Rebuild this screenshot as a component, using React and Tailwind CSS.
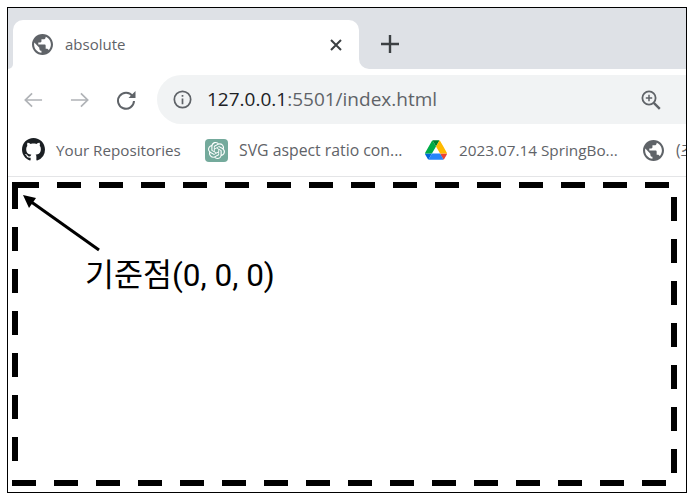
// App.jsx
import React from 'react';
import { SiOpenai } from 'react-icons/si';

const UI_FONT = 'font-["Open_Sans","Noto_Sans_CJK_KR",sans-serif]';

const GLOBE =
  'M12 2C6.48 2 2 6.48 2 12s4.48 10 10 10 10-4.48 10-10S17.52 2 12 2zm-1 17.93c-3.95-.49-7-3.85-7-7.93 0-.62.08-1.21.21-1.79L9 15v1c0 1.1.9 2 2 2v1.93zm6.9-2.54c-.26-.81-1-1.39-1.9-1.39h-1v-3c0-.55-.45-1-1-1H8v-2h2c.55 0 1-.45 1-1V7h2c1.1 0 2-.9 2-2v-.41c2.93 1.19 5 4.06 5 7.41 0 2.08-.8 3.97-2.1 5.39z';

const Globe = ({ className }) => (
  <svg viewBox="2 2 20 20" className={className} fill="#5f6368">
    <path d={GLOBE} />
  </svg>
);

const GithubMark = () => (
  <svg viewBox="0 0 16 16" className="w-[23px] h-[23px] shrink-0" fill="#1b1f23">
    <path d="M8 0C3.58 0 0 3.58 0 8c0 3.54 2.29 6.53 5.47 7.59.4.07.55-.17.55-.38 0-.19-.01-.82-.01-1.49-2.01.37-2.53-.49-2.69-.94-.09-.23-.48-.94-.82-1.13-.28-.15-.68-.52-.01-.53.63-.01 1.08.58 1.23.82.72 1.21 1.87.87 2.33.66.07-.52.28-.87.51-1.07-1.78-.2-3.64-.89-3.64-3.95 0-.87.31-1.59.82-2.15-.08-.2-.36-1.02.08-2.12 0 0 .67-.21 2.2.82.64-.18 1.32-.27 2-.27.68 0 1.36.09 2 .27 1.53-1.04 2.2-.82 2.2-.82.44 1.1.16 1.92.08 2.12.51.56.82 1.27.82 2.15 0 3.07-1.87 3.75-3.65 3.95.29.25.54.73.54 1.48 0 1.07-.01 1.93-.01 2.2 0 .21.15.46.55.38A8.013 8.013 0 0016 8c0-4.42-3.58-8-8-8z" />
  </svg>
);

const DriveLogo = () => (
  <svg viewBox="0 0 87.3 78" className="w-[22px] h-[20px] shrink-0">
    <path d="m6.6 66.85 3.85 6.65c.8 1.4 1.95 2.5 3.3 3.3l13.75-23.8h-27.5c0 1.55.4 3.1 1.2 4.5z" fill="#0066da" />
    <path d="m43.65 25-13.75-23.8c-1.35.8-2.5 1.9-3.3 3.3l-25.4 44a9.06 9.06 0 0 0 -1.2 4.5h27.5z" fill="#00ac47" />
    <path d="m73.55 76.8c1.35-.8 2.5-1.9 3.3-3.3l1.6-2.75 7.65-13.25c.8-1.4 1.2-2.95 1.2-4.5h-27.502l5.852 11.5z" fill="#ea4335" />
    <path d="m43.65 25 13.75-23.8c-1.35-.8-2.9-1.2-4.5-1.2h-18.5c-1.6 0-3.15.45-4.5 1.2z" fill="#00832d" />
    <path d="m59.8 53h-32.3l-13.75 23.8c1.35.8 2.9 1.2 4.5 1.2h50.8c1.6 0 3.15-.45 4.5-1.2z" fill="#2684fc" />
    <path d="m73.4 26.5-12.7-22c-.8-1.4-1.95-2.5-3.3-3.3l-13.75 23.8 16.15 28h27.45c0-1.55-.4-3.1-1.2-4.5z" fill="#ffba00" />
  </svg>
);

const Arrow = ({ flip }) => (
  <svg viewBox="0 0 20 16" className={`w-[19px] h-[16px] shrink-0 ${flip ? '-scale-x-100' : ''}`} fill="none" stroke="#b0b3b7" strokeWidth="1.8">
    <path d="M1 8h18M8.5 1 1.4 8l7.1 7" />
  </svg>
);

const Bookmark = ({ icon, label, className, textClass }) => (
  <div className={`flex items-center shrink-0 ${className}`}>
    {icon}
    <span className={`mt-px text-[#5f6368] whitespace-nowrap ${textClass} ${UI_FONT}`}>{label}</span>
  </div>
);

// dashes of the outline, coordinates are local to the content area
const range = (start, end) => {
  const out = [];
  for (let v = start; v <= end; v += 42) out.push(v);
  return out;
};

const Outline = () => (
  <svg className="block w-full h-full" viewBox="0 0 678 315" fill="#000">
    <rect x="4" y="5" width="27" height="6" />
    <rect x="4" y="5" width="6" height="27" />
    {range(49, 637).map((x) => (
      <rect key={`t${x}`} x={x} y="5" width="24" height="6" />
    ))}
    {range(4, 634).map((x) => (
      <rect key={`b${x}`} x={x} y="303" width="24" height="6" />
    ))}
    {range(50, 260).map((y) => (
      <rect key={`l${y}`} x="4" y={y} width="6" height="24" />
    ))}
    {range(20, 272).map((y) => (
      <rect key={`r${y}`} x="663" y={y} width="6" height="24" />
    ))}
    <line x1="91" y1="73" x2="22" y2="24" stroke="#000" strokeWidth="3" />
    <polygon points="15,18 28,21 21,31" />
  </svg>
);

export default function App() {
  return (
    <div className="pl-[7px] pt-[7px] bg-white">
      <div className="w-[680px] h-[486px] border border-black flex flex-col overflow-hidden bg-white">
        {/* tab strip */}
        <div className="flex h-[61px] shrink-0 bg-white">
          <div className="w-[5px] bg-[#dee1e6] rounded-br-[8px]" />
          <div className="w-[346px] bg-[#dee1e6] pt-3">
            <div className="h-[49px] bg-white rounded-t-[10px] flex items-center pl-[19px] pr-[17px]">
              <Globe className="w-[21px] h-[21px] shrink-0" />
              <span className={`ml-[12px] text-[15px] text-[#5f6368] ${UI_FONT}`}>absolute</span>
              <svg viewBox="0 0 12 12" className="w-3 h-3 ml-auto" stroke="#3c4043" strokeWidth="2">
                <path d="M1 1l10 10M11 1 1 11" />
              </svg>
            </div>
          </div>
          <div className="flex-1 bg-[#dee1e6] rounded-bl-[10px] flex items-center">
            <svg viewBox="0 0 18 18" className="w-[18px] h-[18px] ml-[22px] mt-[11px]" stroke="#3c4043" strokeWidth="2.4">
              <path d="M9 0v18M0 9h18" />
            </svg>
          </div>
        </div>

        {/* toolbar */}
        <div className="flex items-center mt-[6px] h-[49px] shrink-0 pl-4">
          <Arrow />
          <div className="ml-[27px]">
            <Arrow flip />
          </div>
          <svg viewBox="0 0 20 20" className="w-[20px] h-[20px] ml-[27px] shrink-0" fill="none">
            <path d="M16.6 6.2A8 8 0 1 0 18 11" stroke="#5f6368" strokeWidth="2" />
            <path d="M19.5 1v7h-7z" fill="#5f6368" />
          </svg>
          <div className="ml-[21px] flex-1 h-full bg-[#f1f3f4] rounded-l-full flex items-center pl-[16px]">
            <svg viewBox="0 0 20 20" className="w-[19px] h-[19px] shrink-0" fill="none" stroke="#5f6368" strokeWidth="1.8">
              <circle cx="10" cy="10" r="8.6" />
              <path d="M10 9v6M10 5.2v2" />
            </svg>
            <span className={`ml-[15px] text-[19px] text-[#5f6368] ${UI_FONT}`}>
              <span className="text-[#202124]">127.0.0.1</span>:5501/index.html
            </span>
            <svg viewBox="0 0 20 20" className="w-[20px] h-[20px] ml-auto mr-[25px] shrink-0" fill="none" stroke="#5f6368" strokeWidth="1.8">
              <circle cx="8" cy="8" r="6.6" />
              <path d="M8 4.8v6.4M4.8 8h6.4" strokeWidth="1.5" />
              <path d="m12.8 12.8 6 6" strokeWidth="2.4" />
            </svg>
          </div>
        </div>

        {/* bookmarks */}
        <div className="flex items-center h-[52px] shrink-0 pl-[14px] overflow-hidden border-b border-[#e4e5e7] box-content">
          <Bookmark
            className="w-[183px]"
            textClass="text-[15.2px]"
            icon={<div className="mr-[11px]"><GithubMark /></div>}
            label="Your Repositories"
          />
          <Bookmark
            className="w-[220px]"
            textClass="text-[15.8px]"
            icon={
              <div className="w-[23px] h-[23px] rounded-[4px] bg-[#74aa9c] flex items-center justify-center mr-[11px]">
                <SiOpenai className="w-[17px] h-[17px] text-white" />
              </div>
            }
            label="SVG aspect ratio con..."
          />
          <Bookmark
            className="w-[218px]"
            textClass="text-[15.3px]"
            icon={<div className="mr-[12px]"><DriveLogo /></div>}
            label="2023.07.14 SpringBo..."
          />
          <Bookmark textClass="text-[15.5px]" icon={<Globe className="w-[21px] h-[21px] mr-[12px]" />} label="(초" />
        </div>

        {/* page content */}
        <div className="relative flex-1 min-h-0">
          <Outline />
          <span className='absolute left-[77px] top-[77px] text-[31.5px] leading-[44px] text-black whitespace-nowrap font-["Roboto","Noto_Sans_CJK_KR",sans-serif]'>
            기준점(0, 0, 0)
          </span>
        </div>
      </div>
    </div>
  );
}
